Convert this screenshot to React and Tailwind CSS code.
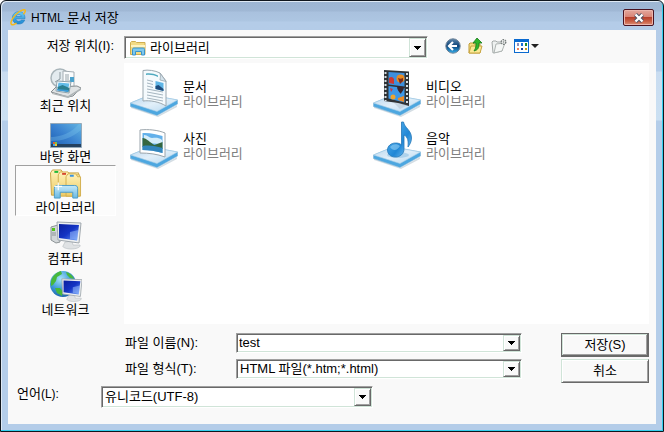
import React from "react";

const FIELD =
  "flex border border-t-[#a0a0a0] border-l-[#a0a0a0] border-r-white border-b-white bg-white p-px shadow-[inset_1px_1px_0_#696969,inset_-1px_-1px_0_#d0e4d8]";

const RAISED =
  "border border-t-[#d0e4d8] border-l-[#d0e4d8] border-r-[#696969] border-b-[#696969] bg-[#f9f9f9] shadow-[inset_1px_1px_0_#ffffff,inset_-1px_-1px_0_#a0a0a0]";

const DEFAULT_BUTTON =
  "border border-[#696969] bg-[#f9f9f9] shadow-[inset_-1px_-1px_0_#696969,inset_1px_1px_0_#d0e4d8,inset_-2px_-2px_0_#a0a0a0,inset_2px_2px_0_#ffffff]";

function DropArrow() {
  return (
    <span className={`flex w-[17px] shrink-0 items-center justify-center ${RAISED}`} aria-hidden="true">
      <svg width="7" height="4" viewBox="0 0 7 4" shapeRendering="crispEdges">
        <path d="M0 0h7v1h-1v1h-1v1h-1v1h-1v-1h-1v-1h-1v-1h-1z" fill="#000" />
      </svg>
    </span>
  );
}

function IeLogo() {
  return (
    <svg width="17" height="17" viewBox="0 0 17 17" aria-hidden="true">
      <defs>
        <linearGradient id="ie" x1="0" y1="0" x2="0" y2="1">
          <stop offset="0" stopColor="#6fcdf5" />
          <stop offset="1" stopColor="#1b86d2" />
        </linearGradient>
      </defs>
      <path
        d="M8.8 2.6c-3.7 0-6.4 2.7-6.4 6.3 0 3.700 2.700 6.200 6.400 6.200 2.900 0 5.100-1.500 5.900-4h-3.500c-.5.800-1.300 1.200-2.400 1.200-1.700 0-2.700-.9-2.900-2.500h9.100c.2-4.400-2.200-7.200-6.200-7.200zM6 7.500c.3-1.300 1.300-2 2.700-2s2.400.7 2.600 2z"
        fill="url(#ie)"
        stroke="#1c77b8"
        strokeWidth=".5"
      />
      <path
        d="M13.800 4.800C15.500 2.700 15.800.9 14.300.7 11.800.4 6.600 4 3.600 8.100 1 11.600.1 15 1.900 15.700c1 .4 2.600-.3 4.100-1.300"
        fill="none"
        stroke="#f3b91d"
        strokeWidth="1.500"
        strokeLinecap="round"
      />
    </svg>
  );
}

function SmallLibraryFolder() {
  return (
    <svg className="mt-0.5 ml-1 shrink-0" width="16" height="16" viewBox="0 0 16 16" aria-hidden="true">
      <path d="M.5 2.500l1-1h4l1 1h8.500v12H.5z" fill="#f3db84" stroke="#cfae50" />
      <path d="M1 5h14v2H1z" fill="#fff3bf" />
      <path d="M2.500 15V9.500c0-1 .5-1.500 1.500-1.500h9c1 0 1.500.5 1.500 1.500V15h-3v-3.500h-6V15z" fill="#7cc8ee" stroke="#3b93c8" />
    </svg>
  );
}

function LibraryFolder() {
  return (
    <svg width="34" height="31" viewBox="0 0 34 32" aria-hidden="true">
      <defs>
        <linearGradient id="fold" x1="0" y1="0" x2="0" y2="1">
          <stop offset="0" stopColor="#fff2b8" />
          <stop offset="1" stopColor="#eccb66" />
        </linearGradient>
        <linearGradient id="stand" x1="0" y1="0" x2="0" y2="1">
          <stop offset="0" stopColor="#c5e9fa" />
          <stop offset="1" stopColor="#6ab9e2" />
        </linearGradient>
      </defs>
      <path d="M1 4l2-3h9l2 3h16v23H2z" fill="url(#fold)" stroke="#c9a548" />
      <path d="M5 2h4v2H5z" fill="#1fb93a" />
      <path d="M9 6l2-3h8l2 3h10v22H9z" fill="url(#fold)" stroke="#d3b050" />
      <path d="M13 4h4v2h-4z" fill="#d6452e" />
      <path d="M17 8l2-3h8l2 3h3v20H17z" fill="url(#fold)" stroke="#d3b050" />
      <path d="M21 6h4v2h-4z" fill="#3a93e0" />
      <path d="M5 20c0-2 1-3 3-3h18c2 0 3 1 3 3v10h-5v-6H11v6H5z" fill="url(#stand)" stroke="#4b9cc8" />
      <path d="M9 14v8M5 18h8" stroke="#fff" strokeWidth="1.200" />
    </svg>
  );
}

function RecentIcon() {
  return (
    <svg width="32" height="30" viewBox="0 0 32 30" aria-hidden="true">
      <circle cx="10" cy="10" r="9" fill="#e3ebef" stroke="#a9b5ba" strokeWidth="1.500" />
      <path d="M10 4v7l-5 3" fill="none" stroke="#8c999f" />
      <path d="M13 3l11 1v15l-11-1z" fill="#fafcfd" stroke="#a4adb3" />
      <path d="M15 7h4M15 9h4M15 11h4M15 13h6" stroke="#98a4aa" />
      <path d="M20 9h4v5h-4z" fill="#4aa2cd" />
      <path d="M1 24l5-5 21-1 4 2-8 8-5 1z" fill="#e0e3e4" stroke="#858c8f" />
      <path d="M2 25l16 3 13-8v2l-13 8-16-4z" fill="#aeb4b6" />
      <path d="M7 13l14 1-2 11-13-2z" fill="#fff" stroke="#8ea1ab" />
      <path d="M8.500 14.500l11 1-1 4-11 0z" fill="#64bce8" />
      <path d="M7.500 19l5-2 7 3-1 4-11-2z" fill="#2c7f8f" />
      <path d="M7.300 21l11 1-.3 2-11-1.500z" fill="#3c9ad6" />
    </svg>
  );
}

function DesktopIcon() {
  return (
    <svg width="32" height="26" viewBox="0 0 32 26" aria-hidden="true">
      <defs>
        <linearGradient id="desk" x1="0" y1="1" x2="1" y2="0">
          <stop offset="0" stopColor="#1b5cb0" />
          <stop offset=".5" stopColor="#3a82d0" />
          <stop offset="1" stopColor="#62b4e2" />
        </linearGradient>
      </defs>
      <path d="M.5 .5h31v24H.5z" fill="url(#desk)" stroke="#95a9b9" />
      <path d="M1 14C12 14 22 9 29 1h2v6C22 15 12 18 1 18z" fill="#7cc2ec" opacity=".35" />
      <path d="M1 21h30v3H1z" fill="#23405f" />
      <path d="M3 19h2v2H3z" fill="#e05f2f" />
      <path d="M5 19h2v2H5z" fill="#7cc142" />
      <path d="M3 21h2v2H3z" fill="#3ba3e8" />
      <path d="M5 21h2v2H5z" fill="#f3c330" />
    </svg>
  );
}

function Monitor() {
  return (
    <g>
      <path d="M15 21l7-1 1 4 7 0c1 2-3 4-9 4-5 0-9-2-8-3z" fill="#dfe2e4" stroke="#b4babd" strokeWidth=".6" />
      <path d="M7 1l24 1-2 20-21-3z" fill="#eceff1" stroke="#a0a8ae" />
      <path d="M9 3l20 1-2 15.500-18-2.500z" fill="url(#screen)" />
      <path d="M20 11l8.500-2-1.300 10-7.200-1z" fill="#9fc3ff" opacity=".5" />
    </g>
  );
}

function ComputerIcon() {
  return (
    <svg width="32" height="30" viewBox="0 0 32 30" aria-hidden="true">
      <defs>
        <linearGradient id="screen" x1="0" y1="0" x2="1" y2="1">
          <stop offset="0" stopColor="#0a1f9e" />
          <stop offset=".5" stopColor="#1434c4" />
          <stop offset="1" stopColor="#6ea2fa" />
        </linearGradient>
      </defs>
      <path d="M1 6l7-2 2 17-4 1-5-3z" fill="#d3d7d9" stroke="#8d9497" />
      <path d="M2 7h3v3H2z" fill="#52c41a" />
      <path d="M2 12h4M2 14h4" stroke="#8d9497" />
      <Monitor />
    </svg>
  );
}

function NetworkIcon() {
  return (
    <svg width="32" height="32" viewBox="0 0 32 32" aria-hidden="true">
      <defs>
        <radialGradient id="globe" cx=".4" cy=".3" r=".8">
          <stop offset="0" stopColor="#a8e4fa" />
          <stop offset=".5" stopColor="#3e9bd8" />
          <stop offset="1" stopColor="#1558a0" />
        </radialGradient>
      </defs>
      <circle cx="13" cy="14" r="13" fill="url(#globe)" />
      <path d="M1 11C3 5 7 2 11 1l1 3-5 3-1 4-3 4-2 1zM16 2c4 1 7 4 8 7l-4-1-3-3zM5 18l5 0 3 4-1 4-5-3z" fill="#48b83c" />
      <g transform="translate(6 8) scale(.84)">
        <Monitor />
      </g>
    </svg>
  );
}

function TrayIcon({ children }) {
  return (
    <svg width="48" height="48" viewBox="0 0 48 48" aria-hidden="true" className="shrink-0">
      <defs>
        <linearGradient id="tray" x1="0" y1="0" x2="1" y2="1">
          <stop offset="0" stopColor="#b5d5ee" />
          <stop offset=".5" stopColor="#e2eff9" />
          <stop offset="1" stopColor="#b4d8f0" />
        </linearGradient>
      </defs>
      <path d="M1 37l26 10 20-11v2L28 48 1 39z" fill="#9fb3c0" opacity=".45" />
      <path d="M.5 34L20 26l27.500 5v4L27 46.500 .5 37.500z" fill="#4da7e0" stroke="#7eb4d6" strokeWidth=".6" />
      <path d="M.5 34L20 26l27.500 5L27 42.500z" fill="url(#tray)" stroke="#a9cee6" strokeWidth=".6" />
      {children}
    </svg>
  );
}

function DocumentsArt() {
  return (
    <g>
      <path d="M13 1.500C18 .5 25 1.500 30 4l6 8v25c-6-4-16-6-23-5z" fill="#f5fafd" stroke="#9aa7af" />
      <path d="M30 4c1 3 0 6 0 7l6 1.500z" fill="#d5e3ec" stroke="#9aa7af" strokeWidth=".8" />
      <path d="M16 4.500c4-.5 8 0 12 2v1.500c-4-2-8-2.500-12-2z" fill="#4fa9bf" />
      <path d="M17 11l6 1.500M17 14l6 1.500M17 17l6 1.500M17 20l16 3M17 23l16 3M17 26l16 3M17 29l16 3" stroke="#9daeb9" strokeWidth=".9" />
      <path d="M25.500 12l8 2v8l-8-2z" fill="#5fb5e6" />
      <path d="M25.500 17l3-1 5 4v2l-8-2z" fill="#1f4c7c" />
    </g>
  );
}

function PicturesArt() {
  return (
    <g>
      <path d="M10 9C18 8 28 9 35 12v24c-8-3-16-4-25-4z" fill="#fff" stroke="#9ba5ac" />
      <path d="M12.500 12c7-.5 14 1 20 3v17c-7-2-13-3-20-3z" fill="#62b0ea" />
      <path d="M14 14c4 0 5 3 8 3s6-1 10 2v4l-18-1z" fill="#d5edf9" />
      <path d="M12.500 17c4 0 8 5 12 7l8-3v7l-20-2z" fill="#35663f" />
      <path d="M12.500 25c7-1 13 0 20 2v5c-7-2-13-3-20-3z" fill="#3386bd" />
    </g>
  );
}

function VideosArt() {
  return (
    <g>
      <path d="M11 1l25 1.500V37L25 34 11 32z" fill="#2f3336" />
      <path d="M15.500 3l16 1v13.500l-16-2z" fill="#3d8fdd" />
      <path d="M15.500 17l16 2v14.500l-16-4z" fill="#3d98e8" />
      <path d="M12.500 3v29M34 4v32" stroke="#d5dde2" strokeWidth="2" strokeDasharray="2 2" />
      <circle cx="27.500" cy="9.500" r="4" fill="#e98b21" />
      <path d="M25 9c2 1 3 1 5 0v3l-3 3z" fill="#7c2b1c" />
      <path d="M16 9c2-2 4-1 5 1v5l-5-1z" fill="#cc3732" />
      <path d="M24 17l7 1c0 4-3 5-3 7-2-2-4-4-4-8z" fill="#38252c" />
      <circle cx="20" cy="28" r="2.500" fill="#f0a52f" />
      <path d="M25 29l6-2v6l-6-2z" fill="#ec8a25" />
      <path d="M17 19l3 1-2 3z" fill="#c93c45" />
      <path d="M35 36l-8 4-6-6 4 0z" fill="#95a2ac" opacity=".3" />
    </g>
  );
}

function MusicArt() {
  return (
    <g>
      <defs>
        <linearGradient id="note" x1="0" y1="0" x2="1" y2="1">
          <stop offset="0" stopColor="#63bdf4" />
          <stop offset=".6" stopColor="#2087d6" />
          <stop offset="1" stopColor="#8dd0f8" />
        </linearGradient>
      </defs>
      <ellipse cx="25" cy="34" rx="11" ry="3" fill="#84b9df" opacity=".5" />
      <path
        d="M28.500 1h2c1 6 8 8 8 16 0 4-2 7-3.500 9 .5-6 0-10-4-12v14c0 5-4 8-8.500 8-5 0-8-3-8-7s3.500-7 8-7c2.500 0 4.500.5 6 2z"
        fill="url(#note)"
        stroke="#2477b8"
        strokeWidth=".8"
      />
      <path d="M17 26c2-3 7-4 10-1-2 4-7 6-10 1z" fill="#a5dcfa" opacity=".5" />
    </g>
  );
}

const TOOL_ICONS = {
  back: (
    <svg width="16" height="16" viewBox="0 0 16 16">
      <defs>
        <linearGradient id="back" x1="0" y1="0" x2="0" y2="1">
          <stop offset="0" stopColor="#5e87ab" />
          <stop offset=".5" stopColor="#0d4379" />
          <stop offset="1" stopColor="#35b0ee" />
        </linearGradient>
      </defs>
      <circle cx="8" cy="8" r="7.200" fill="url(#back)" stroke="#6d8297" />
      <path d="M8 4L4 8l4 4M4.500 8H12" fill="none" stroke="#fff" strokeWidth="2.200" />
    </svg>
  ),
  up: (
    <svg width="16" height="16" viewBox="0 0 16 16">
      <path d="M1 6l1-1h3l1 1h6v9H1z" fill="#f5df82" stroke="#c09b36" />
      <path d="M3 8h11l-2 7H1z" fill="#fbe995" stroke="#c8a440" />
      <path d="M9 0l5 5h-3c0 5-1 7-5 8 2-3 2-5 2-8H5z" fill="#2fb52c" stroke="#177817" strokeWidth=".8" />
    </svg>
  ),
  create: (
    <svg width="16" height="16" viewBox="0 0 16 16">
      <path d="M1 4l1-1h3l1 1h5v9l-9 2z" fill="#eef1f0" stroke="#a3a9a8" />
      <path d="M3 15l2-9 9-1-3 8z" fill="#f5f7f6" stroke="#aeb4b2" />
      <circle cx="12.500" cy="4" r="2.300" fill="#fff" stroke="#777e7d" strokeWidth="1.500" strokeDasharray="1.500 .7" />
      <circle cx="12.500" cy="4" r=".8" fill="#777e7d" />
    </svg>
  ),
  view: (
    <svg width="15" height="14" viewBox="0 0 15 14" shapeRendering="crispEdges">
      <path d="M0 0h15v14H0z" fill="#0a6ad0" />
      <path d="M1 3h13v10H1z" fill="#fff" />
      <path d="M3 4h2v3H3z" fill="#8c8fc0" />
      <path d="M7 4h2v3H7z" fill="#1a6fd8" />
      <path d="M11 4h2v3h-2z" fill="#1c8a2c" />
      <path d="M3 9h2v2H3z" fill="#f0805a" />
      <path d="M7 9h2v2H7z" fill="#1c3f94" />
      <path d="M11 9h2v2h-2z" fill="#c99a12" />
    </svg>
  ),
};

const PLACES = [
  { name: "최근 위치", icon: <RecentIcon /> },
  { name: "바탕 화면", icon: <DesktopIcon /> },
  { name: "라이브러리", icon: <LibraryFolder />, selected: true },
  { name: "컴퓨터", icon: <ComputerIcon /> },
  { name: "네트워크", icon: <NetworkIcon /> },
];

const LIBRARIES = [
  { name: "문서", art: <DocumentsArt /> },
  { name: "비디오", art: <VideosArt /> },
  { name: "사진", art: <PicturesArt /> },
  { name: "음악", art: <MusicArt /> },
];

function TitleBar() {
  return (
    <header className="flex h-[29px] items-center justify-between pt-1 pr-0.5 pl-0.5">
      <h1 className="flex items-center gap-1">
        <IeLogo />
        <span>
          <span className="text-xs">HTML</span> 문서 저장
        </span>
      </h1>
      <button
        type="button"
        aria-label="닫기"
        className="flex h-[17px] w-[31px] items-center justify-center rounded-[2px] border border-[#4a1320] bg-[linear-gradient(#e3a79c_0,#d98476_46%,#b8402c_50%,#c95f45_75%,#dc8f75_100%)] shadow-[inset_0_0_0_1px_#ecb5ac]"
      >
        <svg width="12" height="10" viewBox="0 0 12 10" aria-hidden="true">
          <path d="M2.500 1.500l7 7M9.500 1.500l-7 7" stroke="#4c5366" strokeWidth="4.200" />
          <path d="M2.500 1.500l7 7M9.500 1.500l-7 7" stroke="#fff" strokeWidth="2.400" />
        </svg>
      </button>
    </header>
  );
}

function PlacesBar() {
  return (
    <nav className="mr-2 ml-[7px] w-[101px]">
      {PLACES.map((place) => (
        <button
          key={place.name}
          type="button"
          className={`flex h-[51px] w-full flex-col items-center justify-end border leading-[15px] ${
            place.selected
              ? "border-t-[#a0a0a0] border-l-[#a0a0a0] border-r-white border-b-white bg-[#fcfcfc]"
              : "border-transparent"
          }`}
        >
          {place.icon}
          <span className="whitespace-nowrap">{place.name}</span>
        </button>
      ))}
    </nav>
  );
}

function FileList() {
  return (
    <ul className="mr-[7px] grid h-[261px] min-w-0 flex-1 auto-rows-[52px] grid-cols-[243px_1fr] bg-white pt-1 pl-1.5">
      {LIBRARIES.map((item) => (
        <li key={item.name} className="flex items-center gap-[5px] leading-[15px]">
          <TrayIcon>{item.art}</TrayIcon>
          <div className="pt-px">
            <p>{item.name}</p>
            <p className="text-[#808080]">라이브러리</p>
          </div>
        </li>
      ))}
    </ul>
  );
}

export default function App() {
  return (
    <main className="rounded-t-md border border-[#10161d] bg-[linear-gradient(#9db5d2_0,#a0b8d5_10px,#a9c1de_11px,#adc6e2_20px,#b4cce8_21px,#b4cde9_70px,#c9dcf0_71px,#cbe0f2_119px,#b4cde9_120px)] px-[7px] pb-[7px] font-['Liberation_Sans','Noto_Sans_CJK_KR',sans-serif] text-[13px] leading-4 text-black shadow-[inset_-1px_-1px_0_#35cfee,inset_1px_1px_0_#dfe9f4]">
      <TitleBar />
      <div className="bg-[#f9f9f9] pb-4">
        <div className="flex items-start pt-1.5">
          <label htmlFor="place" className="w-[116px] pt-0.5 pr-2.5 text-right">
            저장 위치(I):
          </label>
          <div className={`h-[23px] w-[304px] ${FIELD}`}>
            <SmallLibraryFolder />
            <select id="place" className="min-w-0 flex-1 appearance-none bg-transparent pl-1 outline-none">
              <option>라이브러리</option>
            </select>
            <DropArrow />
          </div>
          <div className="flex items-center gap-[7px] pt-0.5 pl-[17px]">
            <button type="button" aria-label="뒤로">{TOOL_ICONS.back}</button>
            <button type="button" aria-label="한 수준 위로">{TOOL_ICONS.up}</button>
            <button type="button" aria-label="새 폴더">{TOOL_ICONS.create}</button>
            <button type="button" aria-label="보기" className="flex items-center gap-0.5">
              {TOOL_ICONS.view}
              <svg width="8" height="4" viewBox="0 0 8 4" aria-hidden="true">
                <path d="M0 0h8L4 4z" fill="#222" />
              </svg>
            </button>
          </div>
        </div>

        <div className="mt-1 flex items-start">
          <PlacesBar />
          <FileList />
        </div>

        <form className="mt-[9px]" onSubmit={(event) => event.preventDefault()}>
          <div className="flex items-start">
            <label htmlFor="name" className="ml-[117px] w-[111px] pt-0.5">
              파일 이름(N):
            </label>
            <div className={`h-5 min-w-0 flex-1 ${FIELD}`}>
              <input id="name" type="text" defaultValue="test" className="min-w-0 flex-1 bg-transparent px-px outline-none" />
              <DropArrow />
            </div>
            <button type="submit" className={`mr-[7px] ml-[39px] h-6 w-[88px] ${DEFAULT_BUTTON}`}>
              저장(S)
            </button>
          </div>
          <div className="mt-0.5 flex items-start">
            <label htmlFor="type" className="ml-[117px] w-[111px] pt-0.5">
              파일 형식(T):
            </label>
            <div className={`h-5 min-w-0 flex-1 ${FIELD}`}>
              <select id="type" className="min-w-0 flex-1 appearance-none bg-transparent px-0.5 outline-none">
                <option>HTML 파일(*.htm;*.html)</option>
              </select>
              <DropArrow />
            </div>
            <button type="button" className={`mr-[7px] ml-[39px] h-6 w-[88px] ${RAISED}`}>
              취소
            </button>
          </div>
          <div className="mt-[3px] flex items-start">
            <label htmlFor="language" className="ml-[9px] w-[84px]">
              언어<span className="text-xs">(L):</span>
            </label>
            <div className={`h-[22px] w-[272px] ${FIELD}`}>
              <select id="language" className="min-w-0 flex-1 appearance-none bg-transparent px-0.5 outline-none">
                <option>유니코드(UTF-8)</option>
              </select>
              <DropArrow />
            </div>
          </div>
        </form>
      </div>
    </main>
  );
}
